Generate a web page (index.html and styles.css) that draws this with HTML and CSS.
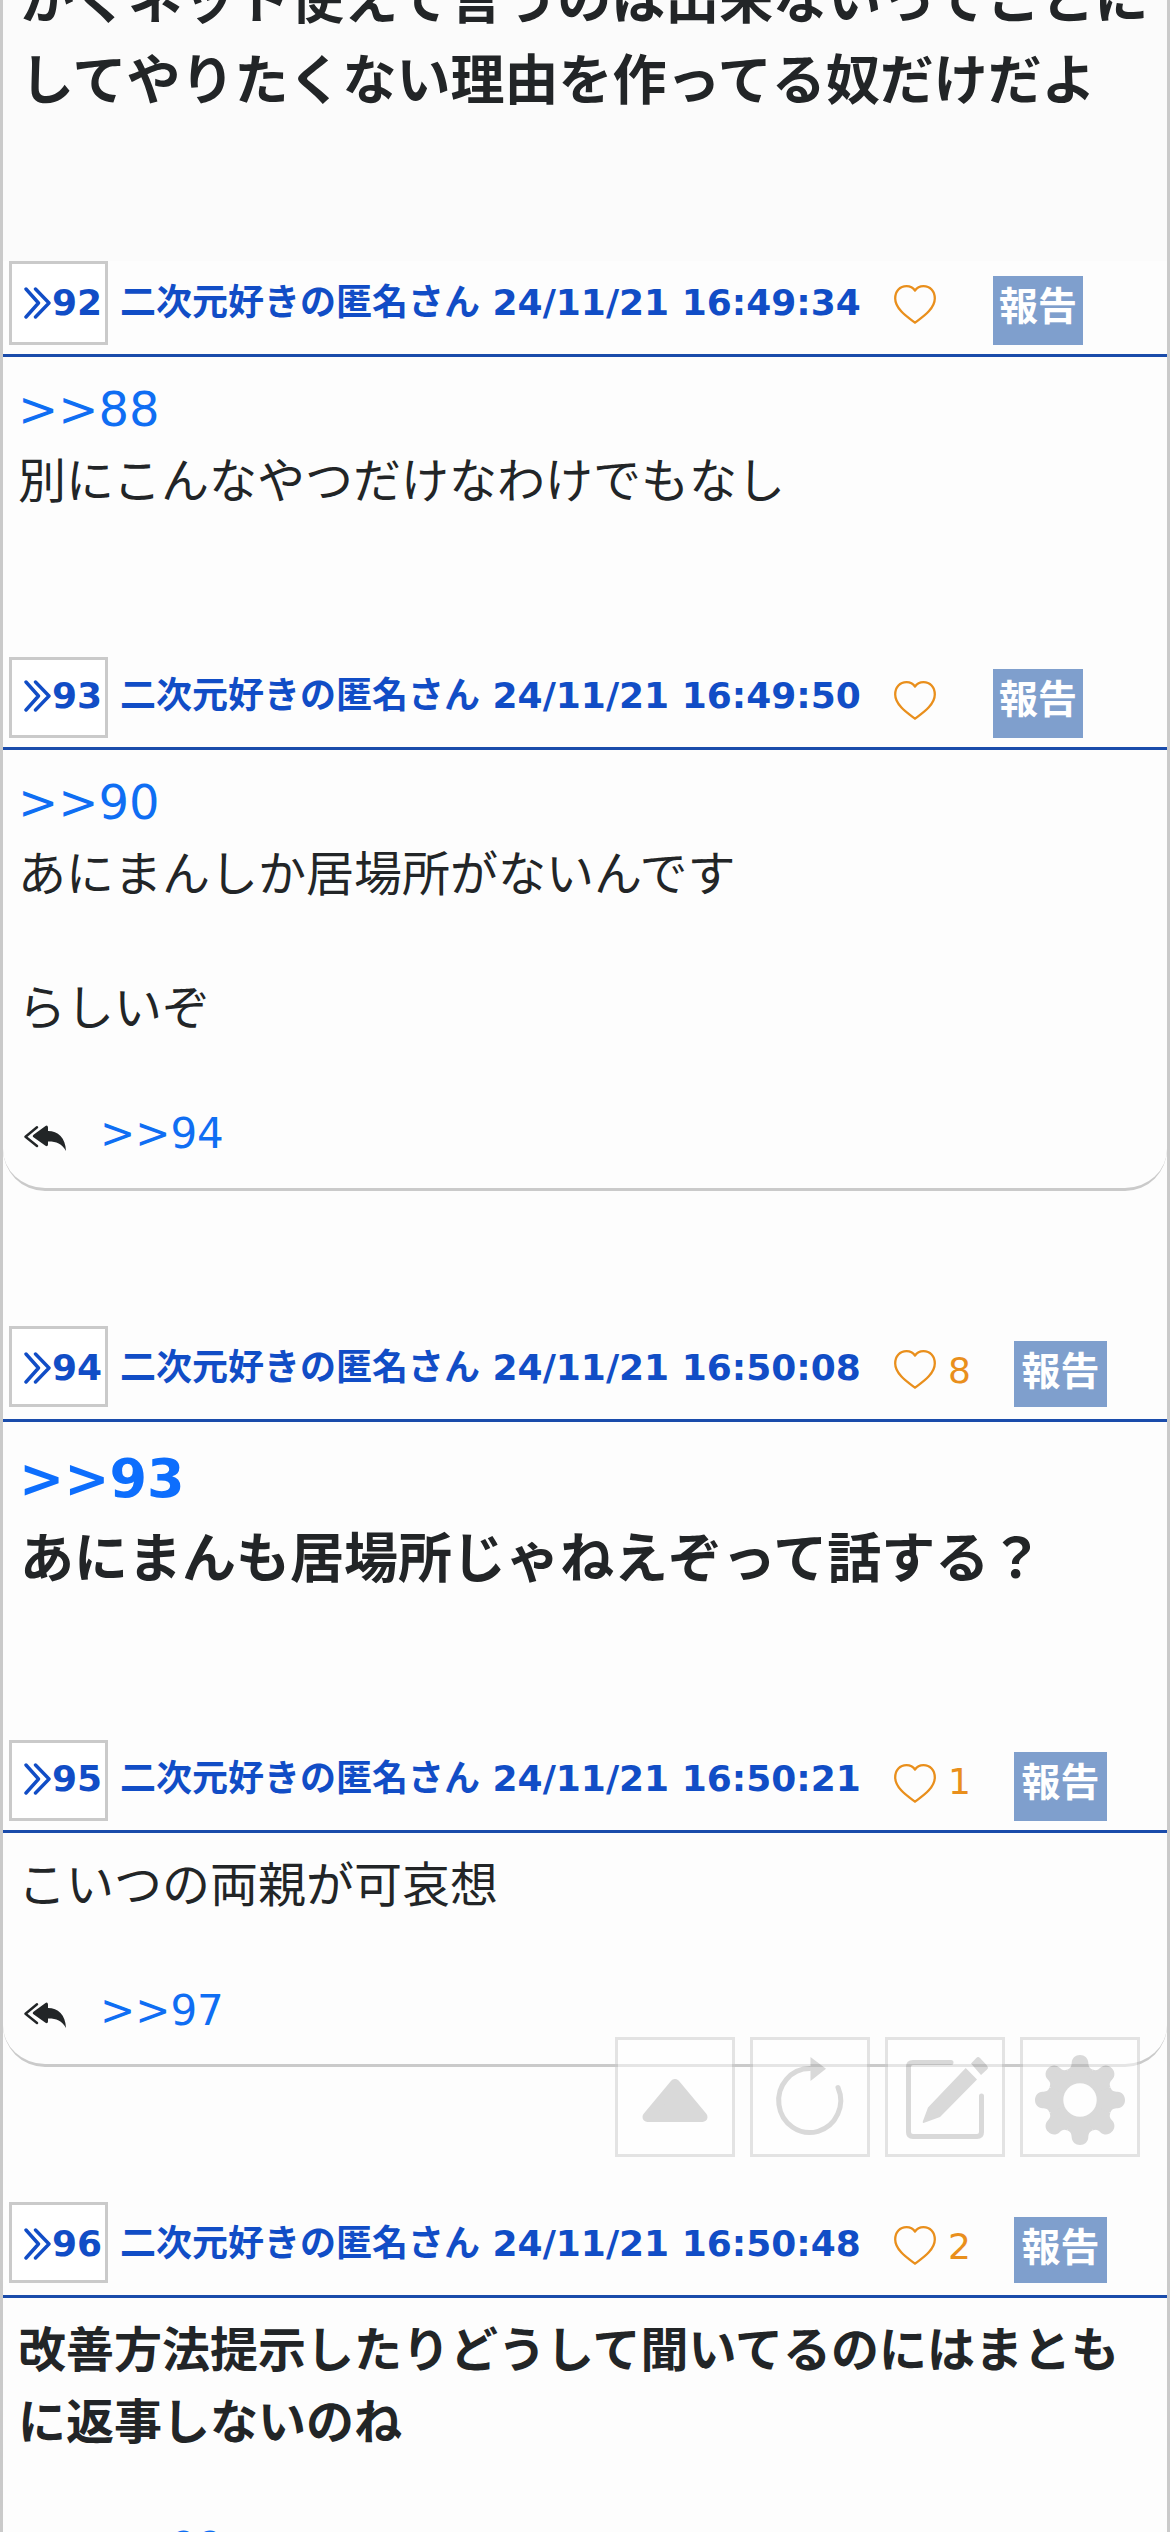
FILE: index.html
```html
<!DOCTYPE html>
<html lang="ja">
<head>
<meta charset="utf-8">
<title>スレッド</title>
<link rel="stylesheet" href="styles.css">
</head>
<body>
<svg class="defs" width="0" height="0">
  <symbol id="angles" viewBox="0 0 28 32"><path d="M2 2 14.500 16 2 30M11.500 2 25 16 11.500 30" fill="none" stroke="currentColor" stroke-width="3.400" stroke-linecap="round" stroke-linejoin="round"/></symbol>
  <symbol id="heart" viewBox="0 0 42 39"><path d="M21 37.700C15 33 1.200 24.500 1.200 13.500 1.200 6 6 1.200 12.500 1.200 16 1.200 19 2.500 21 5.500 23 2.500 26 1.200 29.500 1.200 36 1.200 40.800 6 40.800 13.500 40.800 24.500 27 33 21 37.700Z" fill="none" stroke="currentColor" stroke-width="2.300" stroke-linejoin="round"/></symbol>
  <symbol id="reply" viewBox="0 0 42 26"><path d="M13 2.200 1.500 11.700 13 21" fill="none" stroke="currentColor" stroke-width="2.400" stroke-linecap="round" stroke-linejoin="round"/><path d="M21.500 1Q23.700-.3 24 2.500V6C34 6 41.500 12.500 42 26 38 18.500 31.500 16.300 24 16.500V19.500Q23.700 22.200 21.500 20.800L9.500 12.300Q8 11 9.500 9.700Z" fill="currentColor"/></symbol>
</svg>
<main class="thread">
  <article class="post post-91">
    <p class="line">かくネット使えて言うのは出来ないってことに</p>
    <p class="line">してやりたくない理由を作ってる奴だけだよ</p>
  </article>

  <article class="post post-92">
    <header class="head tall">
      <a class="num"><svg><use href="#angles"/></svg>92</a>
      <span class="name">二次元好きの匿名さん 24/11/21 16:49:34</span>
      <span class="like"><svg><use href="#heart"/></svg></span>
      <button class="report">報告</button>
    </header>
    <div class="body">
      <p class="line"><a class="ref">&gt;&gt;88</a></p>
      <p class="line">別にこんなやつだけなわけでもなし</p>
    </div>
  </article>

  <article class="post post-93">
    <header class="head low">
      <a class="num"><svg><use href="#angles"/></svg>93</a>
      <span class="name">二次元好きの匿名さん 24/11/21 16:49:50</span>
      <span class="like"><svg><use href="#heart"/></svg></span>
      <button class="report">報告</button>
    </header>
    <div class="body card">
      <p class="line"><a class="ref">&gt;&gt;90</a></p>
      <p class="line">あにまんしか居場所がないんです</p>
      <p class="line blank"></p>
      <p class="line">らしいぞ</p>
      <p class="replies"><svg><use href="#reply"/></svg><a class="ref">&gt;&gt;94</a></p>
    </div>
  </article>

  <article class="post post-94">
    <header class="head short">
      <a class="num"><svg><use href="#angles"/></svg>94</a>
      <span class="name">二次元好きの匿名さん 24/11/21 16:50:08</span>
      <span class="like counted"><svg><use href="#heart"/></svg>8</span>
      <button class="report">報告</button>
    </header>
    <div class="body large">
      <p class="line"><a class="ref">&gt;&gt;93</a></p>
      <p class="line">あにまんも居場所じゃねえぞって話する？</p>
    </div>
  </article>

  <article class="post post-95">
    <header class="head low">
      <a class="num"><svg><use href="#angles"/></svg>95</a>
      <span class="name">二次元好きの匿名さん 24/11/21 16:50:21</span>
      <span class="like counted"><svg><use href="#heart"/></svg>1</span>
      <button class="report">報告</button>
    </header>
    <div class="body card">
      <p class="line">こいつの両親が可哀想</p>
      <p class="replies"><svg><use href="#reply"/></svg><a class="ref">&gt;&gt;97</a></p>
    </div>
  </article>

  <article class="post post-96">
    <header class="head short">
      <a class="num"><svg><use href="#angles"/></svg>96</a>
      <span class="name">二次元好きの匿名さん 24/11/21 16:50:48</span>
      <span class="like counted"><svg><use href="#heart"/></svg>2</span>
      <button class="report">報告</button>
    </header>
    <div class="body">
      <p class="line strong">改善方法提示したりどうして聞いてるのにはまとも</p>
      <p class="line strong">に返事しないのね</p>
      <p class="replies"><svg><use href="#reply"/></svg><a class="ref">&gt;&gt;99</a></p>
    </div>
  </article>
</main>

<nav class="tools">
  <button class="tool"><svg viewBox="0 0 120 120"><path d="M60 47 87.500 80H32.500Z" fill="currentColor" stroke="currentColor" stroke-width="10" stroke-linejoin="round"/></svg></button>
  <button class="tool"><svg viewBox="0 0 120 120"><path d="M60 31.500A31 32 0 1 0 88 50.500" fill="none" stroke="currentColor" stroke-width="5" stroke-linecap="round"/><path d="M60.500 20 76 31.700 60.500 44Z" fill="currentColor"/></svg></button>
  <button class="tool"><svg viewBox="0 0 120 120"><path d="M66 25.500H28Q23.500 25.500 23.500 30V95Q23.500 99.500 28 99.500H92Q96.500 99.500 96.500 95V59" fill="none" stroke="currentColor" stroke-width="5" stroke-linecap="round"/><path d="M80.700 31 92 42.500 55 80 38.500 86Q37.500 86 37.800 84.500L43 70.500ZM86 26.500 91.300 21Q93 19.200 95 21L102 28.500Q103.800 30.500 102 32.500L96 38Z" fill="currentColor"/></svg></button>
  <button class="tool"><svg viewBox="-60 -63 120 120"><circle r="31.500" fill="currentColor"/><g fill="currentColor"><path id="tooth" d="M0 0-12.600-30.500C-8.900-32-8.500-34-8.300-37.500-8-42-4.500-45 0-45S8-42 8.300-37.500C8.500-34 8.900-32 12.600-30.500Z"/><use href="#tooth" transform="rotate(45)"/><use href="#tooth" transform="rotate(90)"/><use href="#tooth" transform="rotate(135)"/><use href="#tooth" transform="rotate(180)"/><use href="#tooth" transform="rotate(225)"/><use href="#tooth" transform="rotate(270)"/><use href="#tooth" transform="rotate(315)"/></g><circle r="16.700" fill="#fff"/></svg></button>
</nav>
</body>
</html>
```
FILE: styles.css
```css
* { box-sizing: border-box; }
body {
  margin: 0;
  height: 2532px;
  overflow: hidden;
  background: #fdfdfd;
  color: #222527;
  font: 48px/72px "DejaVu Sans", "Noto Sans CJK JP", sans-serif;
}
p { margin: 0; }
button { font: inherit; padding: 0; border: 0; border-radius: 0; }
.defs { position: absolute; }

.thread {
  height: 2532px;
  overflow: hidden;
  border: solid #cacaca;
  border-width: 0 3px;
}
.line { height: 72px; white-space: nowrap; }
.blank { height: 62px; }
.strong { font-weight: bold; }
.ref { color: #0f6ef3; }

.head {
  display: flex;
  align-items: flex-start;
  height: 96px;
  padding-left: 6px;
  border-bottom: 3px solid #1a4cab;
}
.num {
  display: flex;
  align-items: flex-start;
  width: 99px;
  height: 81px;
  padding: 12px 0 0 12px;
  border: 3px solid #cacaca;
  background: #fff;
  color: #114dc6;
  font-weight: bold;
  font-size: 36px;
  line-height: 54px;
}
.num svg { width: 28px; height: 32px; flex: none; margin-top: 11px; }
.name {
  width: 740px;
  margin-left: 12px;
  padding-top: 15px;
  color: #114dc6;
  font-weight: bold;
  font-size: 36px;
  line-height: 54px;
  white-space: nowrap;
}
.like {
  display: flex;
  width: 131px;
  margin-left: 34px;
  padding-top: 24px;
  color: #e98f1c;
  font-size: 36px;
  line-height: 42px;
}
.like svg { width: 42px; height: 39px; margin-right: 12px; }
.report {
  display: flex;
  justify-content: center;
  width: 90px;
  height: 69px;
  margin: 15px 0 0 -32px;
  background: #7f9fcd;
  color: #fff;
  font-weight: bold;
  font-size: 39px;
  line-height: 61px;
}
.counted + .report { width: 93px; margin-left: -11px; }
.tall .num { height: 84px; }
.low .num { margin-top: 3px; padding-top: 9px; }
.low .like svg { margin-top: 3px; }
.short .report { height: 66px; }

.body { padding: 16px 15px 0; }
.card {
  border-bottom: 3px solid #cacaca;
  border-radius: 0 0 42px 42px;
}
.large, .post-91 { font-size: 54px; font-weight: bold; line-height: 81px; }
.large { padding-left: 17px; }
.large .line, .post-91 .line { height: 81px; }
.large .ref { margin-left: -1px; color: #0d6efd; }
.post-91 {
  height: 261px;
  padding-left: 17px;
  overflow: hidden;
  background: #fbfbfb;
}
.post-91 .line:first-child { margin-top: -40px; }
.post-92 { height: 393px; }
.post-93 { height: 672px; }
.post-93 .card { height: 441px; }
.post-94 { height: 411px; }
.post-95 { height: 465px; }
.post-95 .card { height: 234px; }

.replies {
  display: flex;
  align-items: flex-start;
  gap: 34px;
  margin-top: 58px;
  padding-left: 6px;
  font-size: 42px;
  line-height: 63px;
}
.replies svg { width: 42px; height: 26px; margin-top: 23px; }

.tools {
  position: fixed;
  right: 30px;
  top: 2037px;
  display: flex;
  gap: 15px;
}
.tool {
  width: 120px;
  height: 120px;
  border: 3px solid #cacaca;
  background: #fff;
  color: #b5b5b5;
  opacity: .5;
}
.tool svg { display: block; width: 120px; height: 120px; margin: -3px; }
```
